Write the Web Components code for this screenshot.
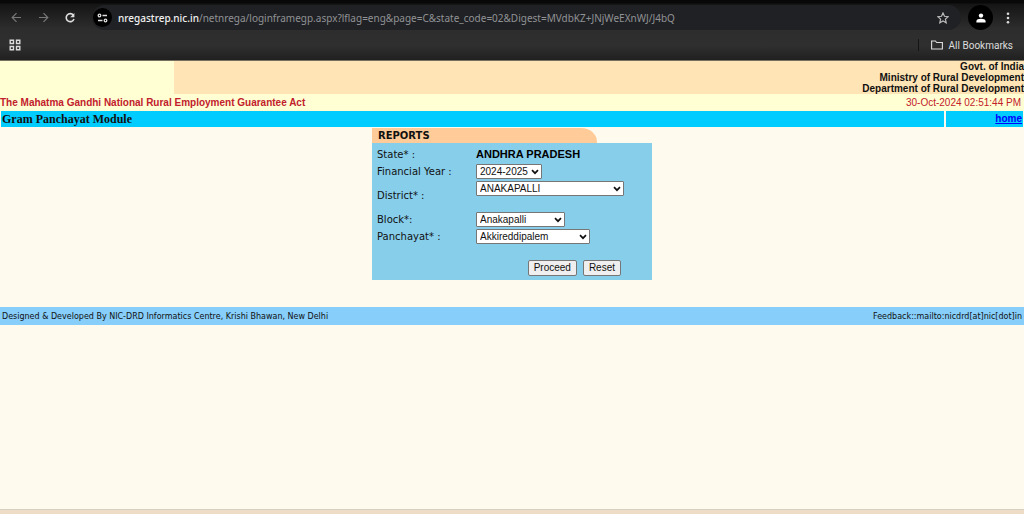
<!DOCTYPE html>
<html lang="en">
<head>
<meta charset="utf-8">
<title>Gram Panchayat Module</title>
<style>
  html, body { height: 100%; }
  body { margin: 0; background: #fffaee; font-family: "Liberation Sans", Arial, sans-serif; font-size: 10px; color: #111; }
</style>
</head>
<body>
<app-shell>
  <browser-bar slot="top"></browser-bar>
  <site-header></site-header>
  <module-bar>Gram Panchayat Module</module-bar>
  <report-panel heading="REPORTS">
    <form-row label="State* :"><b>ANDHRA PRADESH</b></form-row>
    <form-row label="Financial Year :" options="2024-2025" class="year"></form-row>
    <form-row label="District* :" options="ANAKAPALLI" class="district"></form-row>
    <form-row label="Block*:" options="Anakapalli" class="block"></form-row>
    <form-row label="Panchayat* :" options="Akkireddipalem" class="panchayat"></form-row>
  </report-panel>
  <site-footer>
    <span>Designed &amp; Developed By NIC-DRD Informatics Centre, Krishi Bhawan, New Delhi</span>
    <span slot="end">Feedback::mailto:nicdrd[at]nic[dot]in</span>
  </site-footer>
</app-shell>
<script>
  class Base extends HTMLElement {
    constructor() {
      super();
      this.attachShadow({ mode: "open" });
    }
    connectedCallback() {
      this.shadowRoot.innerHTML = this.view();
    }
  }

  customElements.define("app-shell", class extends Base {
    view() {
      return `<style>
        :host { display: flex; flex-direction: column; min-height: 100vh; }
        main { flex: 1; }
        .edge { height: 4px; border-top: 1px solid #d6d0c2; background: #eedcc6; }
      </style>
      <slot name="top"></slot><main><slot></slot></main><div class="edge"></div>`;
    }
  });

  customElements.define("browser-bar", class extends Base {
    view() {
      return `<style>
        :host { display: block; box-sizing: border-box; height: 61px; border-bottom: 1px solid #77705f;
          background: linear-gradient(#080808 0, #080808 3px, #151515 4px, #2d2d2d 29px, #2f2f2f 46px, #202020 60px);
          font-family: "Noto Sans", "Open Sans", sans-serif; font-size: 10px; color: #ddd; }
        .nav { display: flex; align-items: center; height: 25px; padding: 5px 12px 0 8px; }
        button { border: 0; padding: 0; background: none; color: inherit; display: grid; place-items: center; flex: none; }
        .tool { width: 16px; height: 16px; margin-right: 11px; }
        .dim { color: #777; }
        .omni { flex: 1; min-width: 0; display: flex; align-items: center; height: 25px; margin-left: 3px;
          border-radius: 13px; background: #202124; }
        .site { width: 19px; height: 19px; border-radius: 50%; background: #000; margin-left: 1px; }
        .url { flex: 1; min-width: 0; margin-left: 6px; line-height: 16px; white-space: nowrap; overflow: hidden; color: #909295; }
        .url b { font-weight: 500; color: #f1f1f1; }
        .star { width: 16px; margin-right: 10px; color: #bbb; }
        .user { width: 25px; height: 25px; border-radius: 50%; background: #000; margin-left: 7px; color: #fff; }
        .menu { width: 8px; margin-left: 11px; }
        .marks { display: flex; align-items: center; height: 30px; padding: 0 11px 0 9px; font-size: 10px; }
        .all { margin-left: auto; display: flex; align-items: center; padding-left: 12px; border-left: 1px solid #151515; height: 12px; }
        .all button { display: flex; align-items: center; gap: 6px; font: 10px Roboto, sans-serif; white-space: nowrap; }
        svg { display: block; fill: none; stroke: currentColor; }
      </style>
      <div class="nav">
        <button class="tool dim" aria-label="Back"><svg width="11" height="11" viewBox="0 0 11 11" stroke-width="1.2"><path d="M10 5.5H1.5M5.5 1.2 1.2 5.5l4.3 4.3"/></svg></button>
        <button class="tool dim" aria-label="Forward"><svg width="11" height="11" viewBox="0 0 11 11" stroke-width="1.2"><path d="M1 5.5h8.5M5.5 1.2l4.3 4.3-4.3 4.3"/></svg></button>
        <button class="tool" aria-label="Reload"><svg width="12" height="12" viewBox="0 0 12 12" stroke-width="1.6"><path d="M9.4 3.2A4 4 0 1 0 10 7"/><path d="M10.4 1v4.2H6.2z" fill="currentColor" stroke="none"/></svg></button>
        <div class="omni">
          <button class="site" aria-label="Site information"><svg width="11" height="10" viewBox="0 0 11 10" stroke-width="1.3"><circle cx="2.5" cy="2.5" r="1.3"/><path d="M5.5 2.5H10M1 7.5h4.5"/><circle cx="8.5" cy="7.5" r="1.3"/></svg></button>
          <div class="url"><b>nregastrep.nic.in</b>/netnrega/loginframegp.aspx?lflag=eng&amp;page=C&amp;state_code=02&amp;Digest=MVdbKZ+JNjWeEXnWJ/J4bQ</div>
          <button class="star" aria-label="Bookmark"><svg width="12" height="12" viewBox="0 0 12 12" stroke-width="1.2"><path d="M6 1l1.5 3.3 3.6.4-2.7 2.4.8 3.6L6 8.9l-3.2 1.8.8-3.6L.9 4.7l3.6-.4z"/></svg></button>
        </div>
        <button class="user" aria-label="Profile"><svg width="10" height="10" viewBox="0 0 10 10"><g fill="currentColor" stroke="none"><circle cx="5" cy="2.6" r="2.2"/><path d="M.4 9.5V8c0-3 9.2-3 9.2 0v1.5z"/></g></svg></button>
        <button class="menu" aria-label="Menu"><svg width="4" height="12" viewBox="0 0 4 12"><g fill="currentColor" stroke="none"><circle cx="2" cy="1.7" r="1.3"/><circle cx="2" cy="6" r="1.3"/><circle cx="2" cy="10.3" r="1.3"/></g></svg></button>
      </div>
      <div class="marks">
        <button aria-label="Apps"><svg width="12" height="12" viewBox="0 0 12 12" stroke-width="1.4"><path d="M1.2 1.2h3.3v3.3H1.2zM7.5 1.2h3.3v3.3H7.5zM1.2 7.5h3.3v3.3H1.2zM7.5 7.5h3.3v3.3H7.5z"/></svg></button>
        <div class="all"><button><svg width="12" height="10" viewBox="0 0 12 10" stroke-width="1.1"><path d="M.6 9V1h3.8l1.3 1.5h5.7V9z"/></svg><span>All Bookmarks</span></button></div>
      </div>`;
    }
  });

  customElements.define("site-header", class extends Base {
    view() {
      return `<style>
        :host { display: block; background: #ffffd3; }
        .top { margin-left: 17%; background: #ffe4b5; text-align: right; font-weight: bold; line-height: 11px; }
        .line { display: flex; justify-content: space-between; line-height: 17px; color: #c2202c; }
        time { padding-right: 3px; }
      </style>
      <div class="top">Govt. of India<br>Ministry of Rural Development<br>Department of Rural Development</div>
      <div class="line"><b>The Mahatma Gandhi National Rural Employment Guarantee Act</b><time>30-Oct-2024 02:51:44 PM</time></div>`;
    }
  });

  customElements.define("module-bar", class extends Base {
    view() {
      return `<style>
        :host { display: flex; gap: 2px; padding: 0 1px; line-height: 16px; font-weight: bold; }
        div { background: #00ccff; padding: 0 1px; }
        .name { flex: 1; font-family: "Liberation Serif", "Times New Roman", serif; font-size: 12px; }
        .link { width: 75px; text-align: right; }
        a { color: #00f; }
      </style>
      <div class="name"><slot></slot></div><div class="link"><a href="#">home</a></div>`;
    }
  });

  customElements.define("report-panel", class extends Base {
    view() {
      return `<style>
        :host { display: block; width: 280px; margin: 1px auto 0; font-family: Verdana, "DejaVu Sans", sans-serif; }
        h2 { margin: 0; width: 219px; padding-left: 6px; font-size: 10px; line-height: 15px; background: #ffcc99; border-top-right-radius: 16px 14px; }
        form { background: #87ceeb; padding: 3px 5px 4px; }
        .actions { display: flex; justify-content: flex-end; gap: 6px; padding: 15px 26px 0 0; }
        button { box-sizing: border-box; height: 16px; padding: 0 5px; border: 1px solid #767676; border-radius: 2px; background: #efefef;
          color: #111; font: 10px/14px "Liberation Sans", Arial, sans-serif; }
      </style>
      <h2>${this.getAttribute("heading")}</h2>
      <form><slot></slot><div class="actions"><button type="button">Proceed</button><button type="reset">Reset</button></div></form>`;
    }
  });

  customElements.define("form-row", class extends Base {
    view() {
      const label = this.getAttribute("label");
      const option = this.getAttribute("options");
      return `<style>
        :host { display: grid; grid-template-columns: 99px 1fr; align-items: center; height: 17px; }
        :host(.district) { height: 31px; }
        :host(.district) .field { align-self: start; padding-top: 1px; }
        label, .label { line-height: 15px; }
        .field { display: flex; }
        ::slotted(b) { font-family: "Liberation Sans", Arial, sans-serif; font-size: 11px; line-height: 15px; color: #000; }
        select { appearance: none; box-sizing: border-box; height: 15px; padding: 0 3px; border: 1px solid #767676; border-radius: 1px;
          background: #fff url("data:image/svg+xml,%3Csvg xmlns='http://www.w3.org/2000/svg' width='8' height='6'%3E%3Cpath d='M1 1.2l3 3 3-3' fill='none' stroke='%23111' stroke-width='1.7'/%3E%3C/svg%3E") no-repeat right 2px center;
          color: #111; font: 10px/13px "Liberation Sans", Arial, sans-serif; width: 66px; }
        :host(.district) select { width: 148px; }
        :host(.block) select { width: 89px; }
        :host(.panchayat) select { width: 114px; }
      </style>
      ${option
        ? `<label for="f">${label}</label><div class="field"><select id="f"><option>${option}</option></select></div>`
        : `<span class="label">${label}</span><div class="field"><slot></slot></div>`}`;
    }
  });

  customElements.define("site-footer", class extends Base {
    view() {
      return `<style>
        :host { display: flex; justify-content: space-between; margin-top: 27px; padding: 2px 2px 0; background: #87cefa;
          font-family: Verdana, "DejaVu Sans", sans-serif; font-size: 8px; line-height: 16px; }
      </style>
      <div><slot></slot></div><div><slot name="end"></slot></div>`;
    }
  });
</script>
</body>
</html>
